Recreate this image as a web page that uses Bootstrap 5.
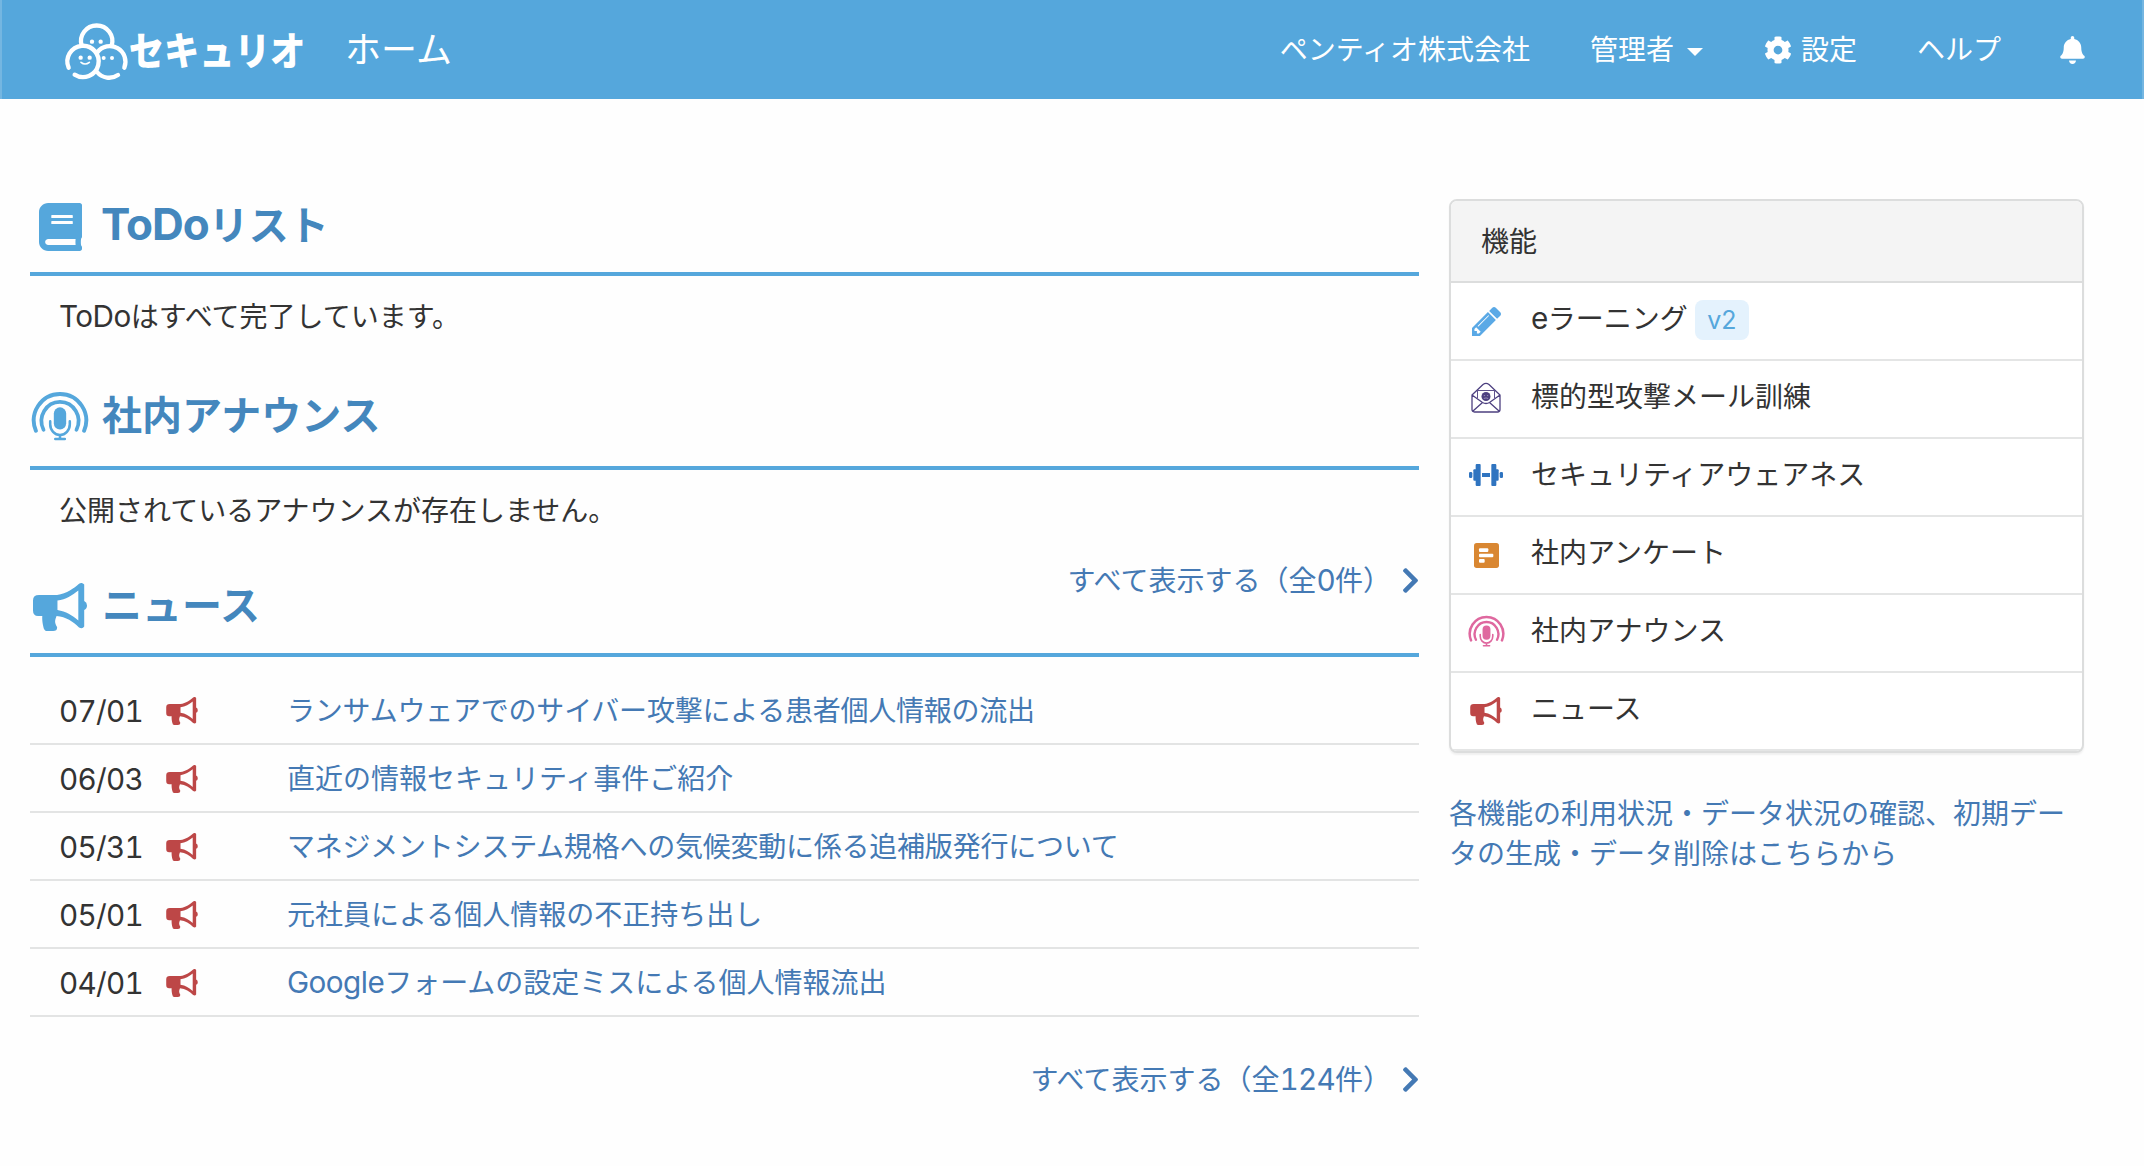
<!DOCTYPE html>
<html lang="ja">
<head>
<meta charset="utf-8">
<title>セキュリオ ホーム</title>
<meta name="viewport" content="width=device-width, initial-scale=1">
<link href="https://cdn.jsdelivr.net/npm/bootstrap@5.3.0/dist/css/bootstrap.min.css" rel="stylesheet">
<style>
body{font-family:Inter,"Noto Sans CJK JP",sans-serif;font-size:28px;line-height:40px;color:#333;font-weight:400;background:#fefefe;overflow:hidden}
a{color:#4479b4;text-decoration:none}
svg{display:block;flex:none}
.topbar{height:99px;background:#55a7dc;border-left:2px solid #74b6e1;border-right:2px solid #74b6e1;color:#fff;padding:0 57px 0 62px}
.topbar a{color:#fff}
.brand-mark{overflow:visible}
.page-name{font-size:36px;margin-left:33px}
.latin{font-size:1.06em;letter-spacing:-.018em}
.digits{font-size:1.06em;letter-spacing:-.025em;font-variant-numeric:tabular-nums}
.sec-head .latin{font-size:1.1em;letter-spacing:-.022em;font-weight:700;margin-left:-1px}
.tight{letter-spacing:-.23px}
.caret-mark{border:8px solid transparent;border-top:8px solid #fff;border-bottom:0;margin:4px 0 0 13px}
.main-area{padding:100px 60px 0 30px;gap:30px}
.main-col{width:1389px}
.side-col{width:635px}
.sec-head{border-bottom:4px solid #55a7dc;color:#4487bd;font-size:40px;font-weight:700;line-height:50px}
.sec-head .ico{width:60px;margin-right:12px;display:flex;justify-content:center;color:#55a7dc}
.head-a{height:77px;padding-bottom:21px}
.sec-text{padding:20px 29px 0;height:74px}
.sec-text.low{padding-top:21px}
.head-b{height:120px;padding-bottom:25px}
.head-c{height:113px;padding-bottom:22px}
.more{height:40px;gap:12px;font-size:28px;line-height:40px;font-weight:400;margin-right:1px}
.head-c .more{margin-top:16px}
.news-list{padding-top:20px}
.news-item{height:68px;border-bottom:2px solid #e3e4e4;padding:1px 0 0 29px}
.news-date{width:107px}
.news-icon{width:121px;color:#bd4747}
.features{border:2px solid #dcdddd;border-radius:8px;box-shadow:0 2px 2px rgba(0,0,0,.06);overflow:hidden;background:#fff}
.features-head{height:82px;background:#f4f4f4;border-bottom:2px solid #dcdddd;padding:2px 0 0 30px}
.feature{height:78px;border-bottom:2px solid #e4e5e5;padding-left:15px}
.feature .fi{width:40px;margin-right:25px;display:flex;justify-content:center}
.feature .fi.up{margin-bottom:4px}
.feature .ft{padding-bottom:5px}
.ver{background:#e4f2fd;color:#55a7dc;border-radius:8px;width:54px;height:40px;font-size:25px;line-height:41px;margin:-3px 0 0 7px;text-align:center}
.manage{display:block;margin-top:41px}
</style>
<script src="https://cdn.jsdelivr.net/npm/bootstrap@5.3.0/dist/js/bootstrap.bundle.min.js"></script>
</head>
<body>
<svg width="0" height="0" class="position-absolute">
<symbol id="horn" viewBox="32.9 22 54.1 48"><path fill="currentColor" fill-rule="evenodd" d="M39 34H57C67 33 74 27 79 22.8Q82 20.8 84.2 23.5V40Q87 41.500 87 44.500Q87 48 84.200 49V65.500Q82.500 68.500 79 66.500C73 60.500 66 56 56.500 55C54.500 60 54.500 62 57 66Q57.500 70 53 70H46.500Q44 70 43.200 65.500C42.200 61 42 58 42.200 55H38Q32.900 55 32.900 49.500V39.500Q32.900 34 39 34ZM57.400 39.500V49C66 50.500 72 54 78.300 59.500V29.500C72 34.500 66 38.500 57.400 39.500Z"/></symbol>
<symbol id="mic" viewBox="31 20 58.600 51"><g fill="none" stroke="currentColor" stroke-linecap="round"><path stroke-width="4" d="M35.700 60.500A26.700 27 0 1 1 84.900 60.500"/><path stroke-width="3.800" d="M43.500 59.500A18.900 19.500 0 1 1 77.100 59.500"/><path stroke-width="2.600" d="M50.300 51V54A10 10.800 0 0 0 70.300 54V51M60.300 65V69M55.500 69H65.200"/></g><rect x="54" y="36.700" width="12.600" height="22.600" rx="6.300" fill="currentColor"/></symbol>
<symbol id="chev" viewBox="27 37 266 438"><path fill="currentColor" d="M285.476 272.971L91.132 467.314c-9.373 9.373-24.569 9.373-33.941 0l-22.667-22.667c-9.357-9.357-9.375-24.522-.04-33.901L188.505 256 34.484 101.255c-9.335-9.379-9.317-24.544.04-33.901l22.667-22.667c9.373-9.373 24.569-9.373 33.941 0L285.475 239.030c9.373 9.372 9.373 24.568.001 33.941z"/></symbol>
</svg>

<nav class="topbar d-flex align-items-center">
  <a href="#" class="d-flex align-items-center">
    <svg class="brand-mark" width="248" height="60" viewBox="190 60 744 180">
      <g fill="none" stroke="#fff" stroke-width="13" stroke-linecap="round">
        <path d="M243 137A47 47 0 1 1 333 137"/>
        <path d="M204 203A47 47 0 1 1 222 224"/>
        <path d="M371 203A47 47 0 0 0 290 157"/>
        <path d="M352 225A47 47 0 0 1 289 216"/>
        <path stroke-width="5" d="M241 187Q253 197 266 187"/>
      </g>
      <g fill="#fff"><circle cx="274" cy="125" r="6.500"/><circle cx="300" cy="125" r="6.500"/><circle cx="240" cy="173" r="6.500"/><circle cx="267" cy="173" r="6.500"/><circle cx="309" cy="174" r="6"/><circle cx="334" cy="174" r="6"/></g>
      <text x="384" y="196" textLength="530" lengthAdjust="spacingAndGlyphs" fill="#fff" font-family="Noto Sans CJK JP, sans-serif" font-weight="900" font-size="117">セキュリオ</text>
    </svg>
  </a>
  <span class="page-name">ホーム</span>
  <div class="d-flex align-items-center ms-auto">
    <a href="#">ペンティオ株式会社</a>
    <a href="#" class="d-flex align-items-center" style="margin-left:60px">管理者<span class="caret-mark"></span></a>
    <a href="#" class="d-flex align-items-center" style="margin-left:61px"><svg width="28" height="28" viewBox="0 0 512 512" style="margin-right:9px"><path fill="#fff" d="M487.400 315.700l-42.600-24.600c4.300-23.200 4.300-47 0-70.200l42.600-24.600c4.900-2.800 7.100-8.600 5.500-14-11.100-35.600-30-67.800-54.700-94.600-3.800-4.100-10-5.100-14.800-2.300L380.800 110c-17.900-15.400-38.500-27.300-60.800-35.100V25.800c0-5.600-3.900-10.500-9.400-11.700-36.700-8.200-74.300-7.800-109.200 0-5.500 1.200-9.400 6.100-9.400 11.700V75c-22.200 7.900-42.800 19.800-60.800 35.100L88.700 85.500c-4.900-2.800-11-1.900-14.800 2.300-24.700 26.700-43.600 58.900-54.700 94.600-1.700 5.400.6 11.200 5.500 14L67.300 221c-4.300 23.200-4.300 47 0 70.200l-42.600 24.600c-4.900 2.800-7.100 8.600-5.500 14 11.100 35.600 30 67.800 54.700 94.600 3.800 4.100 10 5.100 14.800 2.300l42.600-24.600c17.900 15.400 38.500 27.300 60.800 35.100v49.200c0 5.600 3.900 10.500 9.400 11.700 36.700 8.200 74.300 7.800 109.200 0 5.500-1.200 9.400-6.100 9.400-11.700v-49.200c22.200-7.900 42.800-19.800 60.800-35.100l42.600 24.600c4.900 2.800 11 1.900 14.800-2.300 24.700-26.700 43.600-58.900 54.700-94.600 1.500-5.500-.7-11.300-5.600-14.100zM256 336c-44.100 0-80-35.900-80-80s35.900-80 80-80 80 35.900 80 80-35.900 80-80 80z"/></svg>設定</a>
    <a href="#" style="margin-left:60px">ヘルプ</a>
    <a href="#" style="margin-left:59px"><svg width="25" height="28" viewBox="0 0 448 512"><path fill="#fff" d="M224 512c35.320 0 63.970-28.650 63.970-64H160.030c0 35.350 28.650 64 63.970 64zm215.390-149.710c-19.320-20.760-55.470-51.990-55.470-154.290 0-77.700-54.480-139.900-127.940-155.160V32c0-17.670-14.320-32-31.980-32s-31.980 14.330-31.980 32v20.840C118.560 68.100 64.080 130.300 64.080 208c0 102.300-36.150 133.530-55.470 154.290-6 6.450-8.660 14.160-8.610 21.710.11 16.400 12.980 32 32.100 32h383.800c19.120 0 32-15.600 32.100-32 .05-7.550-2.610-15.270-8.610-21.710z"/></svg></a>
  </div>
</nav>

<div class="main-area d-flex align-items-start">
  <main class="main-col">
    <h2 class="sec-head head-a d-flex align-items-end m-0"><span class="ico"><svg width="43" height="48" viewBox="0 0 448 512" preserveAspectRatio="none"><path fill="currentColor" d="M448 360V24c0-13.300-10.700-24-24-24H96C43 0 0 43 0 96v320c0 53 43 96 96 96h328c13.300 0 24-10.700 24-24v-16c0-7.500-3.500-14.300-8.900-18.700-4.200-15.400-4.200-59.300 0-74.700 5.400-4.300 8.900-11.100 8.900-18.600zM128 134c0-3.300 2.700-6 6-6h212c3.300 0 6 2.700 6 6v20c0 3.300-2.700 6-6 6H134c-3.300 0-6-2.700-6-6v-20zm0 64c0-3.300 2.700-6 6-6h212c3.300 0 6 2.700 6 6v20c0 3.300-2.700 6-6 6H134c-3.300 0-6-2.700-6-6v-20zm253.400 250H96c-17.700 0-32-14.300-32-32 0-17.600 14.400-32 32-32h285.400c-1.900 17.100-1.900 46.900 0 64z"/></svg></span><span><span class="latin">ToDo</span>リスト</span></h2>
    <div class="sec-text"><span class="latin">ToDo</span>はすべて完了しています。</div>

    <h2 class="sec-head head-b d-flex align-items-end m-0"><span class="ico"><svg width="58" height="50"><use href="#mic"/></svg></span>社内アナウンス</h2>
    <div class="sec-text low">公開されているアナウンスが存在しません。</div>

    <div class="sec-head head-c d-flex align-items-end"><span class="ico"><svg width="54" height="48"><use href="#horn"/></svg></span><span>ニュース</span><a href="#" class="more d-flex align-items-center ms-auto align-self-start"><span>すべて表示する（全<span class="digits">0</span>件）</span><svg width="15" height="25"><use href="#chev"/></svg></a></div>
    <div class="news-list">
      <div class="news-item d-flex align-items-center"><span class="news-date digits">07/01</span><span class="news-icon"><svg width="32" height="28"><use href="#horn"/></svg></span><a href="#" class="tight">ランサムウェアでのサイバー攻撃による患者個人情報の流出</a></div>
      <div class="news-item d-flex align-items-center"><span class="news-date digits">06/03</span><span class="news-icon"><svg width="32" height="28"><use href="#horn"/></svg></span><a href="#">直近の情報セキュリティ事件ご紹介</a></div>
      <div class="news-item d-flex align-items-center"><span class="news-date digits">05/31</span><span class="news-icon"><svg width="32" height="28"><use href="#horn"/></svg></span><a href="#" class="tight">マネジメントシステム規格への気候変動に係る追補版発行について</a></div>
      <div class="news-item d-flex align-items-center"><span class="news-date digits">05/01</span><span class="news-icon"><svg width="32" height="28"><use href="#horn"/></svg></span><a href="#">元社員による個人情報の不正持ち出し</a></div>
      <div class="news-item d-flex align-items-center"><span class="news-date digits">04/01</span><span class="news-icon"><svg width="32" height="28"><use href="#horn"/></svg></span><a href="#"><span class="latin">Google</span>フォームの設定ミスによる個人情報流出</a></div>
    </div>
    <div class="d-flex justify-content-end" style="margin-top:42px"><a href="#" class="more d-flex align-items-center"><span>すべて表示する（全<span class="digits">124</span>件）</span><svg width="15" height="25"><use href="#chev"/></svg></a></div>
  </main>

  <aside class="side-col">
    <div class="features">
      <div class="features-head d-flex align-items-center">機能</div>
      <div class="feature d-flex align-items-center"><span class="fi"><svg width="29" height="29" viewBox="128 149 1516 1516"><path fill="#5aa9e6" d="M491 1536l91-91-235-235-91 91v107h128v128h107zm523-928q0-22-22-22-10 0-17 7l-542 542q-7 7-7 17 0 22 22 22 10 0 17-7l542-542q7-7 7-17zm-54-192l416 416-832 832h-416v-416zm683 96q0 53-37 90l-166 166-416-416 166-165q36-38 90-38 53 0 91 38l235 234q37 39 37 91z"/></svg></span><span class="ft"><span class="latin">e</span>ラーニング</span><span class="ver">v2</span></div>
      <div class="feature d-flex align-items-center"><span class="fi up"><svg width="30" height="31" viewBox="0 0 30 31"><g fill="none" stroke="#4d4080" stroke-width="1.300"><path d="M1 13L12 2.500Q15 .2 18 2.500L29 13V27.500Q29 30 26.500 30H3.500Q1 30 1 27.500ZM1 13L11.500 20.500Q15 22.500 18.500 20.500L29 13M2 29L11.500 20.500M28 29L18.500 20.500"/><path stroke-width=".9" d="M6.500 16V8.500H23.500V16"/></g><circle cx="15" cy="14.500" r="4.500" fill="#4d4080"/><path d="M12.800 13.600h1.300M15.900 13.600h1.300M12.800 16.500Q15 15.300 17.200 16.500" stroke="#b8b0d0" stroke-width=".7" fill="none"/></svg></span><span class="ft">標的型攻撃メール訓練</span></div>
      <div class="feature d-flex align-items-center"><span class="fi up"><svg width="34" height="22" viewBox="0 0 102 66"><g fill="#2f74c0"><rect y="24" width="10" height="18" rx="4"/><rect x="13" y="16" width="12" height="34" rx="3"/><rect x="20" width="15" height="66" rx="3"/><rect x="39" y="27" width="24" height="12"/><rect x="67" width="15" height="66" rx="3"/><rect x="77" y="16" width="12" height="34" rx="3"/><rect x="92" y="24" width="10" height="18" rx="4"/></g></svg></span><span class="ft">セキュリティアウェアネス</span></div>
      <div class="feature d-flex align-items-center"><span class="fi"><svg width="25" height="25" viewBox="0 0 75 75"><rect width="75" height="75" rx="8" fill="#d98732"/><g fill="#fff"><rect x="15" y="16" width="28" height="11" rx="3"/><rect x="15" y="32" width="43" height="11" rx="3"/><rect x="15" y="48" width="17" height="11" rx="3"/></g></svg></span><span class="ft">社内アンケート</span></div>
      <div class="feature d-flex align-items-center"><span class="fi up" style="color:#df689f"><svg width="37" height="32"><use href="#mic"/></svg></span><span class="ft">社内アナウンス</span></div>
      <div class="feature d-flex align-items-center"><span class="fi" style="color:#bd4747"><svg width="32" height="28"><use href="#horn"/></svg></span><span class="ft">ニュース</span></div>
    </div>
    <a href="#" class="manage">各機能の利用状況・データ状況の確認、初期データの生成・データ削除はこちらから</a>
  </aside>
</div>
</body>
</html>
